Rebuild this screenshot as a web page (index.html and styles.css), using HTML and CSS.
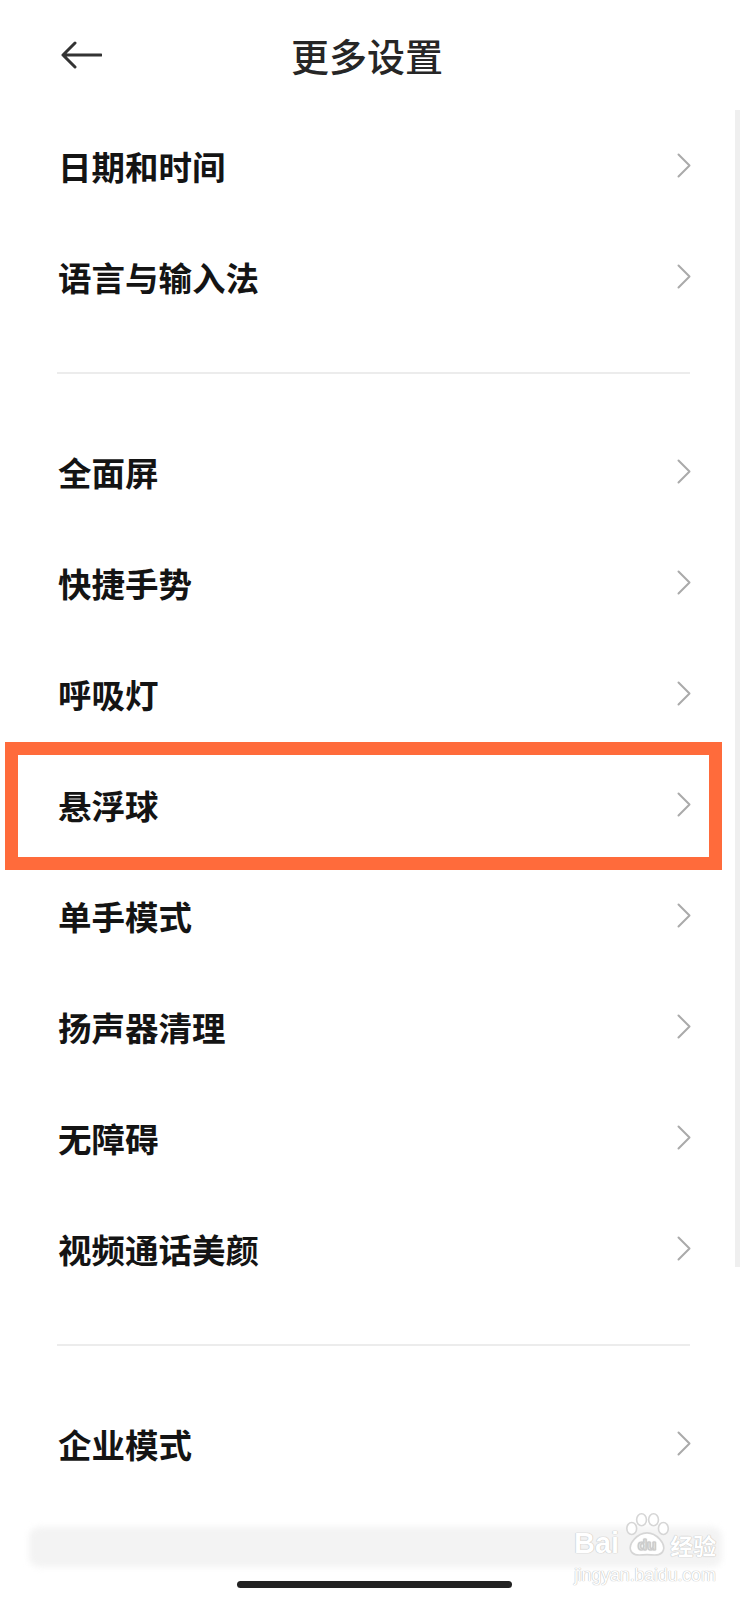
FILE: index.html
```html
<html>

<head>
    <meta charset="utf-8">
    <title>更多设置</title>
    <link rel="stylesheet" href="styles.css">
</head>

<body>
    <div class="page">
        <div class="header">
            <svg class="back" width="42" height="28" viewBox="0 0 42 28">
                <path d="M41 14 H3 M15 2 L3 14 L15 26" fill="none" stroke="#333" stroke-width="3" stroke-linecap="round" stroke-linejoin="round" />
            </svg>
            <div class="title">更多设置</div>
            <div></div>
        </div>

        <div class="group">
            <div class="row"><span class="label">日期和时间</span><i class="chevron"></i></div>
            <div class="row"><span class="label">语言与输入法</span><i class="chevron"></i></div>
        </div>

        <div class="divider"></div>

        <div class="group">
            <div class="row"><span class="label">全面屏</span><i class="chevron"></i></div>
            <div class="row"><span class="label">快捷手势</span><i class="chevron"></i></div>
            <div class="row"><span class="label">呼吸灯</span><i class="chevron"></i></div>
            <div class="row marked"><span class="label">悬浮球</span><i class="chevron"></i></div>
            <div class="row"><span class="label">单手模式</span><i class="chevron"></i></div>
            <div class="row"><span class="label">扬声器清理</span><i class="chevron"></i></div>
            <div class="row"><span class="label">无障碍</span><i class="chevron"></i></div>
            <div class="row"><span class="label">视频通话美颜</span><i class="chevron"></i></div>
        </div>

        <div class="divider"></div>

        <div class="group">
            <div class="row"><span class="label">企业模式</span><i class="chevron"></i></div>
        </div>

        <div class="bottomBar"></div>
        <div class="homeBar"></div>

        <div class="scrollbar"></div>

        <div class="watermark">
            <div class="brand">
                <span>Bai</span>
                <svg class="paw" width="48" height="46" viewBox="0 0 44 42">
                    <g fill="#fff" stroke="#d6d6d6" stroke-width="1.5">
                        <ellipse cx="8" cy="15" rx="4.5" ry="5.5" />
                        <ellipse cx="17" cy="7" rx="4.5" ry="5.5" />
                        <ellipse cx="28" cy="7" rx="4.5" ry="5.5" />
                        <ellipse cx="37" cy="15" rx="4.5" ry="5.5" />
                        <path d="M22 19 C13 19 5 29 7 35 C9 41 16 39 22 39 C28 39 35 41 37 35 C39 29 31 19 22 19 Z" />
                    </g>
                    <text x="22" y="35" text-anchor="middle" class="pawText">du</text>
                </svg>
                <span class="cn">经验</span>
            </div>
            <div class="site">jingyan.baidu.com</div>
        </div>
    </div>
</body>

</html>
```

FILE: styles.css
```css
body {
    margin: 0;
    background: #fff;
    font-family: "Noto Sans CJK SC", "Noto Sans", sans-serif;
}

.page {
    position: relative;
    width: 748px;
    height: 1600px;
    overflow: hidden;
}

.header {
    height: 110px;
    display: grid;
    grid-template-columns: 1fr auto 1fr;
    align-items: center;
    padding: 0 74px 0 60px;
}

.back {
    display: block;
}

.title {
    font-size: 38px;
    font-weight: 500;
    color: #262626;
    line-height: 1;
}

.row {
    position: relative;
    height: 111px;
    display: flex;
    align-items: center;
    justify-content: space-between;
    padding: 0 57px 0 58px;
}

.label {
    font-size: 33.5px;
    font-weight: 700;
    color: #141414;
    line-height: 1;
}

.chevron {
    width: 14px;
    height: 25px;
    background: no-repeat center / 14px 25px url("data:image/svg+xml;utf8,<svg xmlns='http://www.w3.org/2000/svg' width='14' height='25' viewBox='0 0 14 25'><path d='M1.5 1.5 L12.5 12.5 L1.5 23.5' fill='none' stroke='%23aaaaaa' stroke-width='2' stroke-linejoin='round' stroke-linecap='round'/></svg>");
}

.marked::after {
    content: "";
    position: absolute;
    top: -7px;
    bottom: -10px;
    left: 5px;
    right: 26px;
    border: 13px solid #ff6b3b;
}

.divider {
    height: 2px;
    background: #ececec;
    margin: 40px 58px 42px 57px;
}

.bottomBar {
    height: 40px;
    margin: 28px 26px 0 29px;
    background: #f3f3f3;
    border-radius: 10px;
    filter: blur(3px);
}

.homeBar {
    width: 275px;
    height: 7px;
    margin: 14px auto 0;
    background: #222;
    border-radius: 4px;
}

.scrollbar {
    position: absolute;
    top: 110px;
    left: 735px;
    width: 5px;
    height: 1157px;
    background: #efefef;
}

.watermark {
    position: absolute;
    left: 574px;
    top: 1512px;
    color: #fff;
    font-family: "Liberation Sans", sans-serif;
    text-shadow: 0 0 1px #bbb, 0 0 1px #bbb;
}

.brand {
    display: flex;
    align-items: flex-end;
    height: 46px;
}

.brand span {
    font-size: 29px;
    font-weight: 700;
    line-height: 1;
}

.brand .cn {
    font-family: "Noto Sans CJK SC", sans-serif;
    font-size: 23px;
    margin-bottom: 1px;
}

.paw {
    display: block;
    margin: 0 -1px 0 4px;
}

.pawText {
    font-family: "Liberation Sans", sans-serif;
    font-size: 14px;
    font-weight: 700;
    fill: #fff;
    stroke: #cfcfcf;
    stroke-width: 0.6;
}

.site {
    font-size: 18px;
    line-height: 1;
    margin-top: 8px;
    letter-spacing: -0.2px;
}
```
